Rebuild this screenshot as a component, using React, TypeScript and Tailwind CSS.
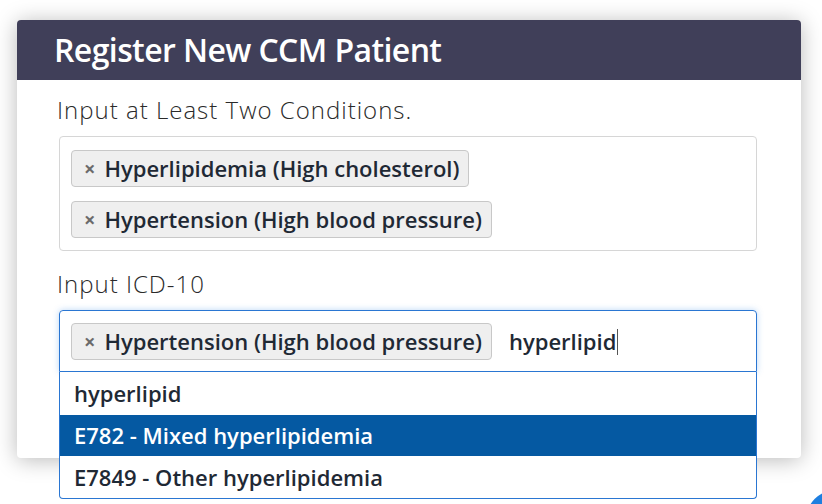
import React from 'react';

const Tag: React.FC<{ label: string }> = ({ label }) => (
  <span className="flex h-[37px] items-center rounded-[4px] border border-[#c8c8c8] bg-[#efefef] pl-[12px] pr-[9px] text-[22px] font-semibold text-[#1f2935]">
    <span className="mr-[9px] text-[20px] font-bold text-[#6b6b6b]">×</span>
    {label}
  </span>
);

export default function App() {
  return (
    <div className="relative h-[504px] w-[822px] overflow-hidden bg-white font-['Open_Sans',sans-serif]">
      <div className="ml-[17px] mt-[20px] h-[438px] w-[784px] rounded-[4px] bg-white shadow-[0_2px_22px_rgba(0,0,0,0.28)]">
        <div className="flex h-[60px] items-center rounded-t-[4px] bg-[#403f59] px-[37px]">
          <h1 className="text-[32px] font-semibold tracking-[-0.6px] text-white">Register New CCM Patient</h1>
        </div>

        <div className="px-[42px] pt-[15px]">
          <p className="-ml-[2px] text-[24px] font-light leading-[30px] tracking-[1px] text-[#2a2a2a]">Input at Least Two Conditions.</p>

          <div className="mt-[11px] flex w-[698px] flex-col items-start gap-[14px] rounded-[4px] border border-[#d6d6d6] px-[11px] pb-[12px] pt-[13px]">
            <Tag label="Hyperlipidemia (High cholesterol)" />
            <Tag label="Hypertension (High blood pressure)" />
          </div>

          <p className="-ml-[2px] mt-[18px] text-[24px] font-light leading-[30px] tracking-[1px] text-[#2a2a2a]">Input ICD-10</p>

          <div className="relative mt-[11px] w-[698px]">
            <div className="flex h-[62px] items-start gap-[17px] rounded-t-[4px] border border-[#2a76d2] px-[11px] pt-[12px] shadow-[0_0_6px_rgba(60,140,230,0.35)]">
              <Tag label="Hypertension (High blood pressure)" />
              <span className="flex h-[37px] items-center text-[22px] font-semibold text-[#1f2935]">
                hyperlipid
                <span className="ml-[1px] h-[26px] w-px bg-[#555]" />
              </span>
            </div>

            <ul className="absolute left-0 top-[62px] w-[698px] overflow-hidden rounded-b-[4px] border-x border-b border-[#2a76d2] bg-white text-[22px] font-semibold text-[#1f2935]">
              <li className="flex h-[43px] items-center px-[14px]">hyperlipid</li>
              <li className="flex h-[41px] items-center bg-[#0559a2] px-[14px] text-white">E782 - Mixed hyperlipidemia</li>
              <li className="flex h-[42px] items-center px-[14px]">E7849 - Other hyperlipidemia</li>
            </ul>
          </div>
        </div>
      </div>

      <div className="absolute left-[806px] top-[490px] h-[60px] w-[60px] rounded-full bg-[#1e7fe0]" />
    </div>
  );
}
